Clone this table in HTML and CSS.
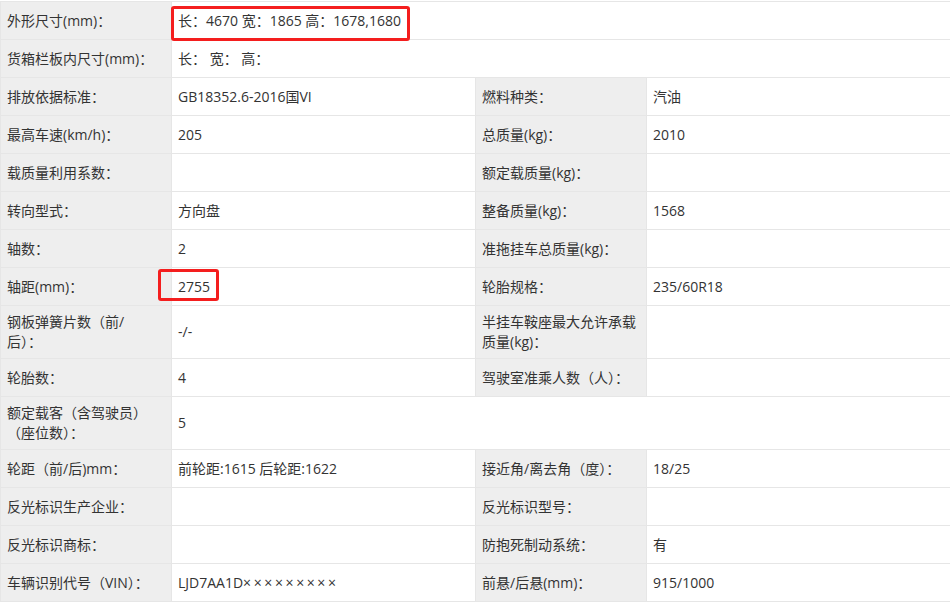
FILE: index.html
```html
<!DOCTYPE html>
<html>
<head>
    <meta charset="utf-8">
    <title>车辆参数</title>
    <link rel="stylesheet" href="styles.css">
</head>
<body>

<table class="params-tab">
    <colgroup>
        <col class="col-label">
        <col class="col-value">
        <col class="col-label2">
        <col class="col-value2">
    </colgroup>
    <tbody>
    <tr>
        <td class="label">外形尺寸(mm)：</td>
        <td colspan="3"><span class="mark mark-size">长：4670 宽：1865 高：1678,1680</span></td>
    </tr>
    <tr>
        <td class="label">货箱栏板内尺寸(mm)：</td>
        <td colspan="3">长： 宽： 高：</td>
    </tr>
    <tr>
        <td class="label">排放依据标准：</td><td>GB18352.6-2016国VI</td>
        <td class="label">燃料种类：</td><td>汽油</td>
    </tr>
    <tr>
        <td class="label">最高车速(km/h)：</td><td>205</td>
        <td class="label">总质量(kg)：</td><td>2010</td>
    </tr>
    <tr>
        <td class="label">载质量利用系数：</td><td></td>
        <td class="label">额定载质量(kg)：</td><td></td>
    </tr>
    <tr>
        <td class="label">转向型式：</td><td>方向盘</td>
        <td class="label">整备质量(kg)：</td><td>1568</td>
    </tr>
    <tr>
        <td class="label">轴数：</td><td>2</td>
        <td class="label">准拖挂车总质量(kg)：</td><td></td>
    </tr>
    <tr>
        <td class="label">轴距(mm)：</td><td><span class="mark mark-wheelbase">2755</span></td>
        <td class="label">轮胎规格：</td><td>235/60R18</td>
    </tr>
    <tr>
        <td class="label">钢板弹簧片数（前/<br>后）：</td><td>-/-</td>
        <td class="label">半挂车鞍座最大允许承载质量(kg)：</td><td></td>
    </tr>
    <tr>
        <td class="label">轮胎数：</td><td>4</td>
        <td class="label">驾驶室准乘人数（人）：</td><td></td>
    </tr>
    <tr>
        <td class="label">额定载客（含驾驶员）（座位数）：</td>
        <td colspan="3">5</td>
    </tr>
    <tr>
        <td class="label">轮距（前/后)mm：</td><td>前轮距:1615 后轮距:1622</td>
        <td class="label">接近角/离去角（度）：</td><td>18/25</td>
    </tr>
    <tr>
        <td class="label">反光标识生产企业：</td><td></td>
        <td class="label">反光标识型号：</td><td></td>
    </tr>
    <tr>
        <td class="label">反光标识商标：</td><td></td>
        <td class="label">防抱死制动系统：</td><td>有</td>
    </tr>
    <tr>
        <td class="label">车辆识别代号（VIN）：</td><td>LJD7AA1D<span class="masked">×××××××××</span></td>
        <td class="label">前悬/后悬(mm)：</td><td>915/1000</td>
    </tr>
    </tbody>
</table>

</body>
</html>
```

FILE: styles.css
```css
html, body {
    margin: 0;
    padding: 0;
    background: #ffffff;
    overflow: hidden;
}

.params-tab {
    margin-top: 1px;
    width: 950px;
    table-layout: fixed;
    border-collapse: collapse;
    font-family: "Open Sans", "Noto Sans CJK SC", sans-serif;
    font-size: 14px;
    line-height: 20px;
    color: #333333;
}

.col-label, .col-label2 {
    width: 171px;
}
.col-value {
    width: 304px;
}

.params-tab td {
    border: 1px solid #e6e6e6;
    height: 25px;
    padding: 6px 6px;
    vertical-align: middle;
    word-break: break-all;
}
.params-tab td:last-child {
    border-right: 0;
}

.params-tab td.label {
    background: #eeeeee;
}

.masked {
    letter-spacing: 2.6px;
}

.mark {
    position: relative;
    display: inline-block;
    vertical-align: top;
}
.mark::after {
    content: "";
    position: absolute;
    border: 3px solid #f41e1e;
    border-radius: 3px;
}
.mark-size::after {
    left: -7px;
    right: -9px;
    top: -5px;
    bottom: -10px;
}
.mark-wheelbase::after {
    left: -20px;
    right: -9px;
    top: -8px;
    bottom: -4px;
}
```
